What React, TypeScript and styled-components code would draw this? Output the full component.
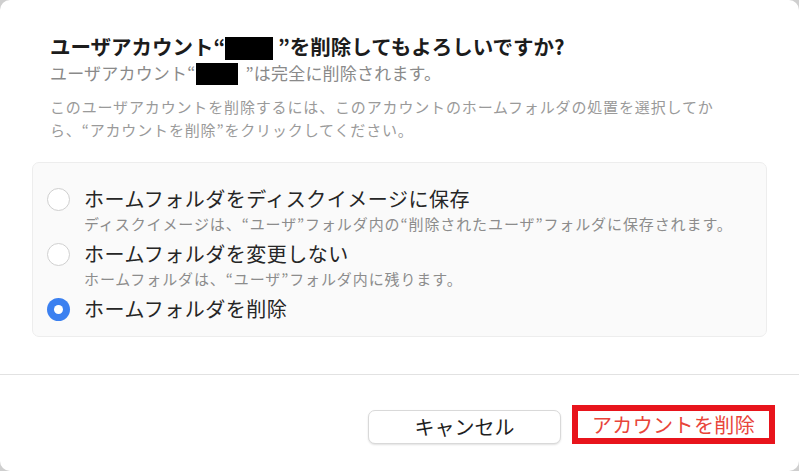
import styled, { createGlobalStyle } from "styled-components";

const GlobalStyle = createGlobalStyle`
  html, body {
    margin: 0;
    padding: 0;
    background: #cfcfcf;
  }
  body {
    font-family: "Noto Sans CJK JP", "Noto Sans", sans-serif;
  }
`;

type Choice = {
  label: string;
  note?: string;
  checked?: boolean;
};

const choices: Choice[] = [
  {
    label: "ホームフォルダをディスクイメージに保存",
    note: "ディスクイメージは、“ユーザ”フォルダ内の“削除されたユーザ”フォルダに保存されます。",
  },
  {
    label: "ホームフォルダを変更しない",
    note: "ホームフォルダは、“ユーザ”フォルダ内に残ります。",
  },
  { label: "ホームフォルダを削除", checked: true },
];

const App = () => {
  return (
    <>
      <GlobalStyle />
      <Dialog>
        <Header>
          <Title>
            ユーザアカウント“<Redact $w={48} $h={23} />&nbsp;”を削除してもよろしいですか?
          </Title>
          <Subtitle>
            ユーザアカウント“<Redact $w={42} $h={22} />&nbsp;&nbsp;”は完全に削除されます。
          </Subtitle>
          <Description>
            このユーザアカウントを削除するには、このアカウントのホームフォルダの処置を選択してか
            <br />
            ら、“アカウントを削除”をクリックしてください。
          </Description>
        </Header>

        <Panel>
          {choices.map((c) => (
            <Option key={c.label}>
              <Radio $checked={!!c.checked} />
              <OptionText>
                <OptionLabel>{c.label}</OptionLabel>
                {c.note && <OptionNote>{c.note}</OptionNote>}
              </OptionText>
            </Option>
          ))}
        </Panel>

        <Divider />

        <Footer>
          <CancelButton>キャンセル</CancelButton>
          <DeleteButton>アカウントを削除</DeleteButton>
        </Footer>
      </Dialog>
    </>
  );
};

export default App;

const Dialog = styled.div`
  width: 799px;
  height: 471px;
  background: #ffffff;
  border-radius: 10px;
  overflow: hidden;
  box-sizing: border-box;
  display: flex;
  flex-direction: column;
`;

const Header = styled.div`
  padding: 34px 0 0 50px;
  display: flex;
  flex-direction: column;
`;

const Title = styled.div`
  font-size: 20.5px;
  font-weight: 700;
  line-height: 24px;
  color: #1c1c1c;
  white-space: nowrap;
`;

const Redact = styled.span<{ $w: number; $h: number }>`
  display: inline-block;
  width: ${(p) => p.$w}px;
  height: ${(p) => p.$h}px;
  background: #000;
  vertical-align: -5px;
`;

const Subtitle = styled.div`
  margin-top: 2px;
  font-size: 17px;
  letter-spacing: 0.2px;
  line-height: 22px;
  color: #8a8a8a;
  white-space: nowrap;
`;

const Description = styled.div`
  margin-top: 10px;
  font-size: 15px;
  letter-spacing: 0.85px;
  line-height: 23px;
  color: #9a9a9a;
  white-space: nowrap;
`;

const Panel = styled.div`
  margin: 21px 0 0 32px;
  width: 735px;
  height: 175px;
  box-sizing: border-box;
  padding: 23px 14px 0 14px;
  background: #fafafa;
  border: 1px solid #ededed;
  border-radius: 7px;
  display: flex;
  flex-direction: column;
  gap: 7px;
`;

const Option = styled.div`
  display: flex;
  align-items: flex-start;
  gap: 14px;
`;

const Radio = styled.span<{ $checked: boolean }>`
  flex: none;
  width: 23px;
  height: 23px;
  margin-top: 1.5px;
  box-sizing: border-box;
  border-radius: 50%;
  position: relative;
  background: ${(p) => (p.$checked ? "#3b80f0" : "#ffffff")};
  border: ${(p) => (p.$checked ? "none" : "1px solid #cfcfcf")};

  &::after {
    content: "";
    display: ${(p) => (p.$checked ? "block" : "none")};
    position: absolute;
    left: 50%;
    top: 50%;
    width: 9px;
    height: 9px;
    margin: -4.5px 0 0 -4.5px;
    border-radius: 50%;
    background: #ffffff;
  }
`;

const OptionText = styled.div`
  display: flex;
  flex-direction: column;
  gap: 2px;
`;

const OptionLabel = styled.div`
  font-size: 20px;
  letter-spacing: 0.5px;
  line-height: 26px;
  color: #262626;
  white-space: nowrap;
`;

const OptionNote = styled.div`
  font-size: 15px;
  letter-spacing: 0.9px;
  line-height: 20px;
  color: #8c8c8c;
  white-space: nowrap;
`;

const Divider = styled.div`
  margin-top: 37px;
  height: 1px;
  background: #e2e2e2;
`;

const Footer = styled.div`
  padding: 30px 24px 0 0;
  display: flex;
  justify-content: flex-end;
  align-items: flex-end;
  gap: 11px;
`;

const CancelButton = styled.button`
  width: 193px;
  height: 34px;
  padding: 0;
  background: #ffffff;
  border: 1px solid #d9d9d9;
  border-radius: 7px;
  box-shadow: 0 1px 2px rgba(0, 0, 0, 0.12);
  font-family: inherit;
  font-size: 20px;
  font-weight: 400;
  color: #1e1e1e;
  line-height: 1;
`;

const DeleteButton = styled.button`
  width: 203px;
  height: 39px;
  padding: 0;
  box-sizing: border-box;
  background: #ffffff;
  border: 6px solid #e8141c;
  border-radius: 0;
  font-family: inherit;
  font-size: 20px;
  letter-spacing: 0.4px;
  color: #e8443a;
  line-height: 1;
`;
